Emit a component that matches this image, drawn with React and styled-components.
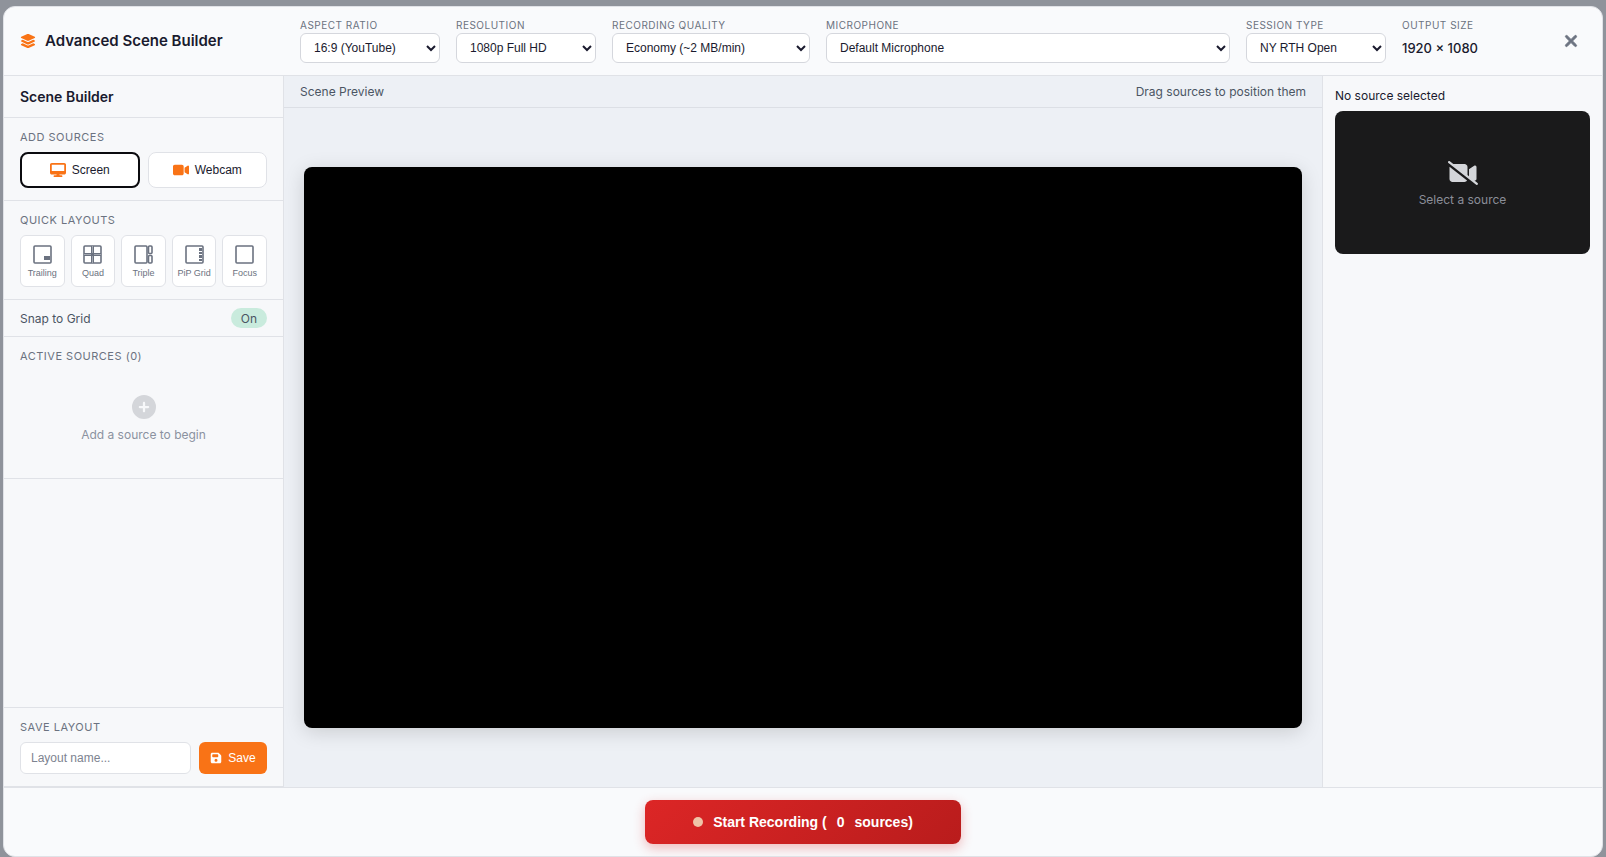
import React from "react";
import styled, { createGlobalStyle, css } from "styled-components";
import {
  FaLayerGroup,
  FaDesktop,
  FaVideo,
  FaVideoSlash,
  FaFloppyDisk,
  FaCirclePlus,
  FaXmark,
} from "react-icons/fa6";

const ui = '"Inter", sans-serif';
const control = '"Liberation Sans", Arial, sans-serif';
const line = "#e0e2e7";

const Global = createGlobalStyle`
  * { box-sizing: border-box; }
  body {
    margin: 0;
    background: #8f939b;
    color: #1a1a2e;
    font-family: ${ui};
  }
  button, input, select { font-family: ${control}; margin: 0; }
`;

const Backdrop = styled.div`
  min-height: 100vh;
  display: flex;
  padding: 6px 3px 0;
`;

const Modal = styled.div`
  flex: 1;
  min-width: 0;
  display: flex;
  flex-direction: column;
  border: 1px solid ${line};
  border-radius: 12px;
  background: #f9fafc;
  overflow: hidden;
`;

const Header = styled.header`
  display: grid;
  grid-template-columns: 280px 1fr auto;
  align-items: center;
  padding: 10px 15px 10px 0;
  height: 69px;
  border-bottom: 1px solid ${line};
`;

const Title = styled.h1`
  margin: 0;
  padding-left: 16px;
  display: flex;
  align-items: center;
  gap: 9px;
  font-size: 15px;
  line-height: 20px;
  font-weight: 600;
  svg { color: #f97316; }
`;

const Fields = styled.div`
  display: grid;
  grid-template-columns: 140px 140px 198px 1fr 140px 140px;
  gap: 16px;
  padding: 0 13px 0 16px;
`;

const Field = styled.div`
  display: flex;
  flex-direction: column;
  gap: 2px;
`;

const FieldLabel = styled.label`
  font-size: 10px;
  line-height: 12px;
  letter-spacing: 0.5px;
  text-transform: uppercase;
  color: #6b7280;
`;

const Select = styled.select`
  width: 100%;
  height: 30px;
  padding: 0 9px;
  border: 1px solid #d5d7dd;
  border-radius: 6px;
  background: #fff;
  color: #1a1a2e;
  font-size: 12px;
`;

const OutputSize = styled.output`
  font-size: 13px;
  line-height: 30px;
  font-weight: 500;
`;

const CloseButton = styled.button`
  width: 32px;
  height: 32px;
  padding: 0;
  border: 0;
  background: none;
  color: #6b7280;
  display: grid;
  place-items: center;
  svg { stroke: currentColor; stroke-width: 24; }
`;

const Body = styled.div`
  flex: 1;
  display: grid;
  grid-template-columns: 280px 1fr 280px;
`;

const Sidebar = styled.aside`
  display: flex;
  flex-direction: column;
  background: #f7f8fa;
  border-right: 1px solid ${line};
`;

const SidebarTitle = styled.h2`
  margin: 0;
  padding: 11px 16px 10px;
  font-size: 14px;
  line-height: 20px;
  font-weight: 600;
  border-bottom: 1px solid ${line};
`;

const Section = styled.section`
  padding: 12px 16px;
  border-bottom: 1px solid ${line};
  ${(p) => p.$bottom && css`
    margin-top: auto;
    border-top: 1px solid ${line};
  `}
  ${(p) => p.$tall && css`min-height: 142px;`}
`;

const SectionTitle = styled.h3`
  display: block;
  margin: 0 0 8px;
  font-size: 11px;
  line-height: 14px;
  font-weight: 400;
  letter-spacing: 0.5px;
  text-transform: uppercase;
  color: #6b7280;
`;

const EqualColumns = styled.div`
  display: grid;
  grid-auto-flow: column;
  grid-auto-columns: minmax(0, 1fr);
  gap: ${(p) => p.$gap}px;
`;

const SourceButton = styled.button`
  height: 36px;
  padding: 0;
  display: flex;
  align-items: center;
  justify-content: center;
  gap: 6px;
  background: #fff;
  color: #1a1a2e;
  font-size: 12px;
  border-radius: 8px;
  border: ${(p) => (p.$active ? "2px solid #0b0b0f" : `1px solid ${line}`)};
  svg { color: #f97316; }
`;

const LayoutButton = styled.button`
  height: 52px;
  padding: 2px 0 0;
  display: flex;
  flex-direction: column;
  align-items: center;
  justify-content: center;
  gap: 4px;
  border: 1px solid ${line};
  border-radius: 6px;
  background: #fff;
  color: #6b7280;
  font-size: 9px;
  line-height: 11px;
  white-space: nowrap;
`;

const SnapRow = styled.div`
  display: flex;
  align-items: center;
  justify-content: space-between;
  padding: 8px 16px;
  border-bottom: 1px solid ${line};
  font-size: 12px;
  color: #4b5563;
`;

const Toggle = styled.button`
  width: 36px;
  height: 20px;
  padding: 2px 0 0;
  border: 0;
  border-radius: 10px;
  background: #c9ebdd;
  color: #4b5563;
  font-family: ${ui};
  font-size: 12px;
  line-height: 18px;
`;

const SnapLabel = styled.span`
  padding-top: 2px;
  line-height: 18px;
`;

const Empty = styled.div`
  display: flex;
  flex-direction: column;
  align-items: center;
  gap: 8px;
  padding-top: 24px;
  font-size: 12px;
  line-height: 16px;
  color: #8b92a0;
  svg { color: #d4d6da; }
`;

const SaveRow = styled.div`
  display: flex;
  gap: 8px;
`;

const NameInput = styled.input`
  flex: 1;
  min-width: 0;
  height: 32px;
  padding: 0 10px;
  border: 1px solid ${line};
  border-radius: 6px;
  background: #fff;
  font-size: 12px;
  &::placeholder { color: #7d8390; }
`;

const SaveButton = styled.button`
  width: 68px;
  height: 32px;
  padding: 0;
  display: flex;
  align-items: center;
  justify-content: center;
  gap: 6px;
  border: 0;
  border-radius: 6px;
  background: #f97316;
  color: #fff;
  font-size: 12px;
`;

const Main = styled.main`
  min-width: 0;
  display: flex;
  flex-direction: column;
  background: #edf0f5;
`;

const PreviewBar = styled.div`
  display: flex;
  justify-content: space-between;
  padding: 6px 16px 5px;
  border-bottom: 1px solid #dcdfe5;
  font-size: 12px;
  line-height: 20px;
  color: #4b5563;
`;

const Stage = styled.div`
  flex: 1;
  display: flex;
  align-items: center;
  padding: 20px;
`;

const Canvas = styled.div`
  width: 100%;
  aspect-ratio: 16 / 9;
  border-radius: 8px;
  background: #000;
  box-shadow: 0 4px 20px rgba(0, 0, 0, 0.15);
`;

const Inspector = styled.aside`
  display: flex;
  flex-direction: column;
  gap: 6px;
  padding: 10px 12px;
  background: #f7f8fa;
  border-left: 1px solid ${line};
  font-size: 12px;
  line-height: 19px;
`;

const SourcePreview = styled.div`
  aspect-ratio: 16 / 9;
  display: flex;
  flex-direction: column;
  align-items: center;
  justify-content: center;
  gap: 4px;
  border-radius: 8px;
  background: #1a1a1b;
  color: #8b8e99;
  line-height: 16px;
  svg { color: #d4d6da; }
`;

const Footer = styled.footer`
  display: flex;
  justify-content: center;
  padding: 12px 16px;
  border-top: 1px solid ${line};
`;

const RecordButton = styled.button`
  height: 44px;
  padding: 0 48px;
  display: flex;
  align-items: center;
  gap: 10px;
  border: 0;
  border-radius: 8px;
  background: linear-gradient(135deg, #dc2626, #b91c1c);
  box-shadow: 0 4px 12px rgba(220, 38, 38, 0.3);
  color: #fff;
  font-size: 14px;
  font-weight: 700;
`;

const Dot = styled.span`
  width: 10px;
  height: 10px;
  border-radius: 50%;
  background: #efc4a8;
`;

const glyphs = {
  Trailing: (
    <>
      <rect x="1" y="1" width="17" height="17" rx="1" />
      <rect x="11" y="11" width="6" height="4" fill="currentColor" stroke="none" />
    </>
  ),
  Quad: (
    <>
      <rect x="1" y="1" width="17" height="17" rx="1" />
      <path d="M9.5 1v17M1 9.5h17" strokeWidth="3" />
      <path d="M9.5 1v7M9.5 11v7M1 9.5h7M11 9.5h7" stroke="#c9ccd2" strokeWidth="0.6" />
    </>
  ),
  Triple: (
    <>
      <rect x="1" y="1" width="12" height="17" rx="1" />
      <rect x="14.5" y="1" width="3.5" height="7.5" rx="1" />
      <rect x="14.5" y="10.5" width="3.5" height="7.5" rx="1" />
    </>
  ),
  "PiP Grid": (
    <>
      <rect x="1" y="1" width="17" height="17" rx="1" />
      <path d="M14 3h3v3h-3zM14 7h3v2h-3zM14 10h3v3h-3zM14 14h3v2h-3z" fill="currentColor" stroke="none" />
    </>
  ),
  Focus: <rect x="1" y="1" width="17" height="17" rx="1" />,
};

const Glyph = ({ name }) => (
  <svg width="19" height="19" viewBox="0 0 19 19" fill="none" stroke="currentColor" strokeWidth="1.6" aria-hidden="true">
    {glyphs[name]}
  </svg>
);

const SelectField = ({ id, label, value }) => (
  <Field>
    <FieldLabel htmlFor={id}>{label}</FieldLabel>
    <Select id={id}>
      <option>{value}</option>
    </Select>
  </Field>
);

export default function App() {
  return (
    <Backdrop>
      <Global />
      <Modal role="dialog" aria-labelledby="title">
        <Header>
          <Title id="title">
            <FaLayerGroup size={16} />
            Advanced Scene Builder
          </Title>
          <Fields>
            <SelectField id="ratio" label="Aspect Ratio" value="16:9 (YouTube)" />
            <SelectField id="resolution" label="Resolution" value="1080p Full HD" />
            <SelectField id="quality" label="Recording Quality" value="Economy (~2 MB/min)" />
            <SelectField id="mic" label="Microphone" value="Default Microphone" />
            <SelectField id="session" label="Session Type" value="NY RTH Open" />
            <Field>
              <FieldLabel htmlFor="output">Output Size</FieldLabel>
              <OutputSize id="output">1920 × 1080</OutputSize>
            </Field>
          </Fields>
          <CloseButton aria-label="Close">
            <FaXmark size={18} />
          </CloseButton>
        </Header>
        <Body>
          <Sidebar>
            <SidebarTitle>Scene Builder</SidebarTitle>
            <Section>
              <SectionTitle>Add Sources</SectionTitle>
              <EqualColumns $gap={8}>
                <SourceButton $active>
                  <FaDesktop size={16} />
                  Screen
                </SourceButton>
                <SourceButton>
                  <FaVideo size={16} />
                  Webcam
                </SourceButton>
              </EqualColumns>
            </Section>
            <Section>
              <SectionTitle>Quick Layouts</SectionTitle>
              <EqualColumns $gap={6}>
                {Object.keys(glyphs).map((name) => (
                  <LayoutButton key={name}>
                    <Glyph name={name} />
                    {name}
                  </LayoutButton>
                ))}
              </EqualColumns>
            </Section>
            <SnapRow>
              <SnapLabel id="snap">Snap to Grid</SnapLabel>
              <Toggle aria-describedby="snap" aria-pressed="true">On</Toggle>
            </SnapRow>
            <Section $tall>
              <SectionTitle>Active Sources (0)</SectionTitle>
              <Empty>
                <FaCirclePlus size={24} />
                Add a source to begin
              </Empty>
            </Section>
            <Section $bottom>
              <SectionTitle as="label" htmlFor="layout-name">Save Layout</SectionTitle>
              <SaveRow>
                <NameInput id="layout-name" placeholder="Layout name..." />
                <SaveButton>
                  <FaFloppyDisk size={12} />
                  Save
                </SaveButton>
              </SaveRow>
            </Section>
          </Sidebar>
          <Main>
            <PreviewBar>
              <span>Scene Preview</span>
              <span>Drag sources to position them</span>
            </PreviewBar>
            <Stage>
              <Canvas />
            </Stage>
          </Main>
          <Inspector>
            No source selected
            <SourcePreview>
              <FaVideoSlash size={30} />
              Select a source
            </SourcePreview>
          </Inspector>
        </Body>
        <Footer>
          <RecordButton>
            <Dot />
            <span>Start Recording (</span>
            <span>0</span>
            <span>sources)</span>
          </RecordButton>
        </Footer>
      </Modal>
    </Backdrop>
  );
}
